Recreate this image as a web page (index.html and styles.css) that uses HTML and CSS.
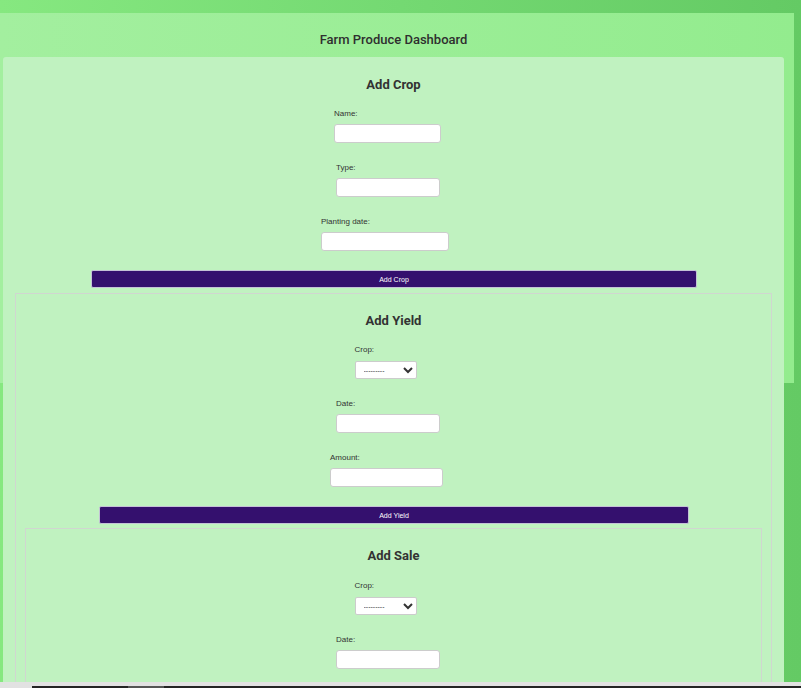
FILE: index.html
```html
<!DOCTYPE html>
<html lang="en">
<head>
<meta charset="utf-8">
<title>Farm Produce Dashboard</title>
<link rel="stylesheet" href="styles.css">
</head>
<body>
<div class="dashboard">
  <h1 class="dash-title">Farm Produce Dashboard</h1>
  <div class="panel">
    <h2 class="section-title">Add Crop</h2>
    <form class="form">
      <div class="field f-name">
        <label class="label">Name:</label>
        <input class="input w-name" type="text">
      </div>
      <div class="field f-type">
        <label class="label">Type:</label>
        <input class="input w-type" type="text">
      </div>
      <div class="field f-plant">
        <label class="label">Planting date:</label>
        <input class="input w-plant" type="text">
      </div>
      <button type="button" class="btn btn-crop">Add Crop</button>
    </form>

    <div class="box box-yield">
      <h2 class="section-title">Add Yield</h2>
      <form class="form">
        <div class="field f-crop">
          <label class="label">Crop:</label>
          <select class="select"><option>---------</option></select>
        </div>
        <div class="field f-date">
          <label class="label">Date:</label>
          <input class="input w-date" type="text">
        </div>
        <div class="field f-amount">
          <label class="label">Amount:</label>
          <input class="input w-amount" type="text">
        </div>
        <button type="button" class="btn btn-yield">Add Yield</button>
      </form>

      <div class="box box-sale">
        <h2 class="section-title">Add Sale</h2>
        <form class="form">
          <div class="field f-crop">
            <label class="label">Crop:</label>
            <select class="select"><option>---------</option></select>
          </div>
          <div class="field f-date">
            <label class="label">Date:</label>
            <input class="input w-date" type="text">
          </div>
        </form>
      </div>
    </div>
  </div>
</div>
<div class="hscroll">
  <div class="hscroll-track"><span class="hscroll-thumb"></span></div>
</div>
</body>
</html>
```
FILE: styles.css
```css
html {
  height: 100%;
  overflow: hidden;
  background: linear-gradient(to right, #86e880 0%, #74d972 50%, #64ca64 100%);
}

body {
  margin: 0;
  padding-top: 13px;
  font-family: "Liberation Sans", Arial, sans-serif;
  color: #333;
}

.dashboard {
  width: 794px;
  box-sizing: border-box;
  padding: 19px 10px 0 3px;
  background: linear-gradient(to right, #a3ef9f, #93ec8e) top left / 100% 370px no-repeat;
}

.dash-title {
  margin: 0 0 9px;
  text-align: center;
  font-family: Roboto, "Liberation Sans", sans-serif;
  font-weight: 500;
  font-size: 13px;
  line-height: 16px;
  color: #2f2f2f;
}

.panel {
  background: #c0f2c0;
  border-radius: 3px;
  padding: 20px 0 0;
  min-height: 640px;
}

.section-title {
  margin: 0 0 16px;
  text-align: center;
  font-family: Roboto, "Liberation Sans", sans-serif;
  font-weight: 700;
  font-size: 13px;
  line-height: 16px;
  color: #333;
}

.form {
  display: flex;
  flex-direction: column;
  align-items: center;
}

.field {
  display: flex;
  flex-direction: column;
  align-items: flex-start;
  margin-right: 12px;
  margin-bottom: 20px;
}

.field:last-of-type {
  margin-bottom: 19px;
}

.f-name { margin-right: 12px; }
.f-type { margin-right: 11px; }
.f-plant { margin-right: 17px; }
.f-crop { margin-right: 16px; }
.f-date { margin-right: 11px; }
.f-amount { margin-right: 14px; }

.label {
  font-size: 8px;
  line-height: 10px;
  color: #333;
  margin-bottom: 5px;
}

.input {
  height: 19px;
  box-sizing: border-box;
  border: 1px solid #cccccc;
  border-radius: 3px;
  background: #fff;
  padding: 0 4px;
  font-size: 8px;
}

.w-name { width: 107px; }
.w-type { width: 104px; }
.w-plant { width: 128px; }
.w-date { width: 104px; }
.w-amount { width: 113px; }

.select {
  width: 62px;
  height: 18px;
  margin-top: 1px;
  box-sizing: border-box;
  border: 1px solid #cccccc;
  border-radius: 2px;
  background: #fff;
  font-family: "Liberation Sans", Arial, sans-serif;
  font-size: 7px;
  color: #333;
  padding: 0 4px;
}

.btn {
  align-self: stretch;
  height: 18px;
  box-sizing: border-box;
  border: 1px solid #c4c2d6;
  border-radius: 2px;
  background: #34106e;
  color: #fff;
  font-family: "Liberation Sans", Arial, sans-serif;
  font-size: 7px;
  padding: 0;
}

.btn-crop { margin: 0 87px 0 88px; }
.btn-yield { margin: 0 82px 0 83px; }

.box {
  border: 1px solid #d0d6d0;
  border-bottom: none;
  padding-top: 19px;
  margin-top: 5px;
}

.box-yield {
  margin-left: 12px;
  margin-right: 12px;
  min-height: 420px;
}

.box-sale {
  margin-left: 9px;
  margin-right: 9px;
  margin-top: 4px;
  min-height: 200px;
}

.box-sale .section-title {
  margin-bottom: 17px;
}

.hscroll {
  position: fixed;
  left: 0;
  right: 0;
  bottom: 0;
  height: 6px;
  background: #e2e2e2;
}

.hscroll-track {
  position: absolute;
  left: 32px;
  right: 0;
  bottom: 0;
  height: 2px;
  background: #242424;
}

.hscroll-thumb {
  position: absolute;
  left: 96px;
  width: 36px;
  top: 0;
  bottom: 0;
  background: #555;
}
```
